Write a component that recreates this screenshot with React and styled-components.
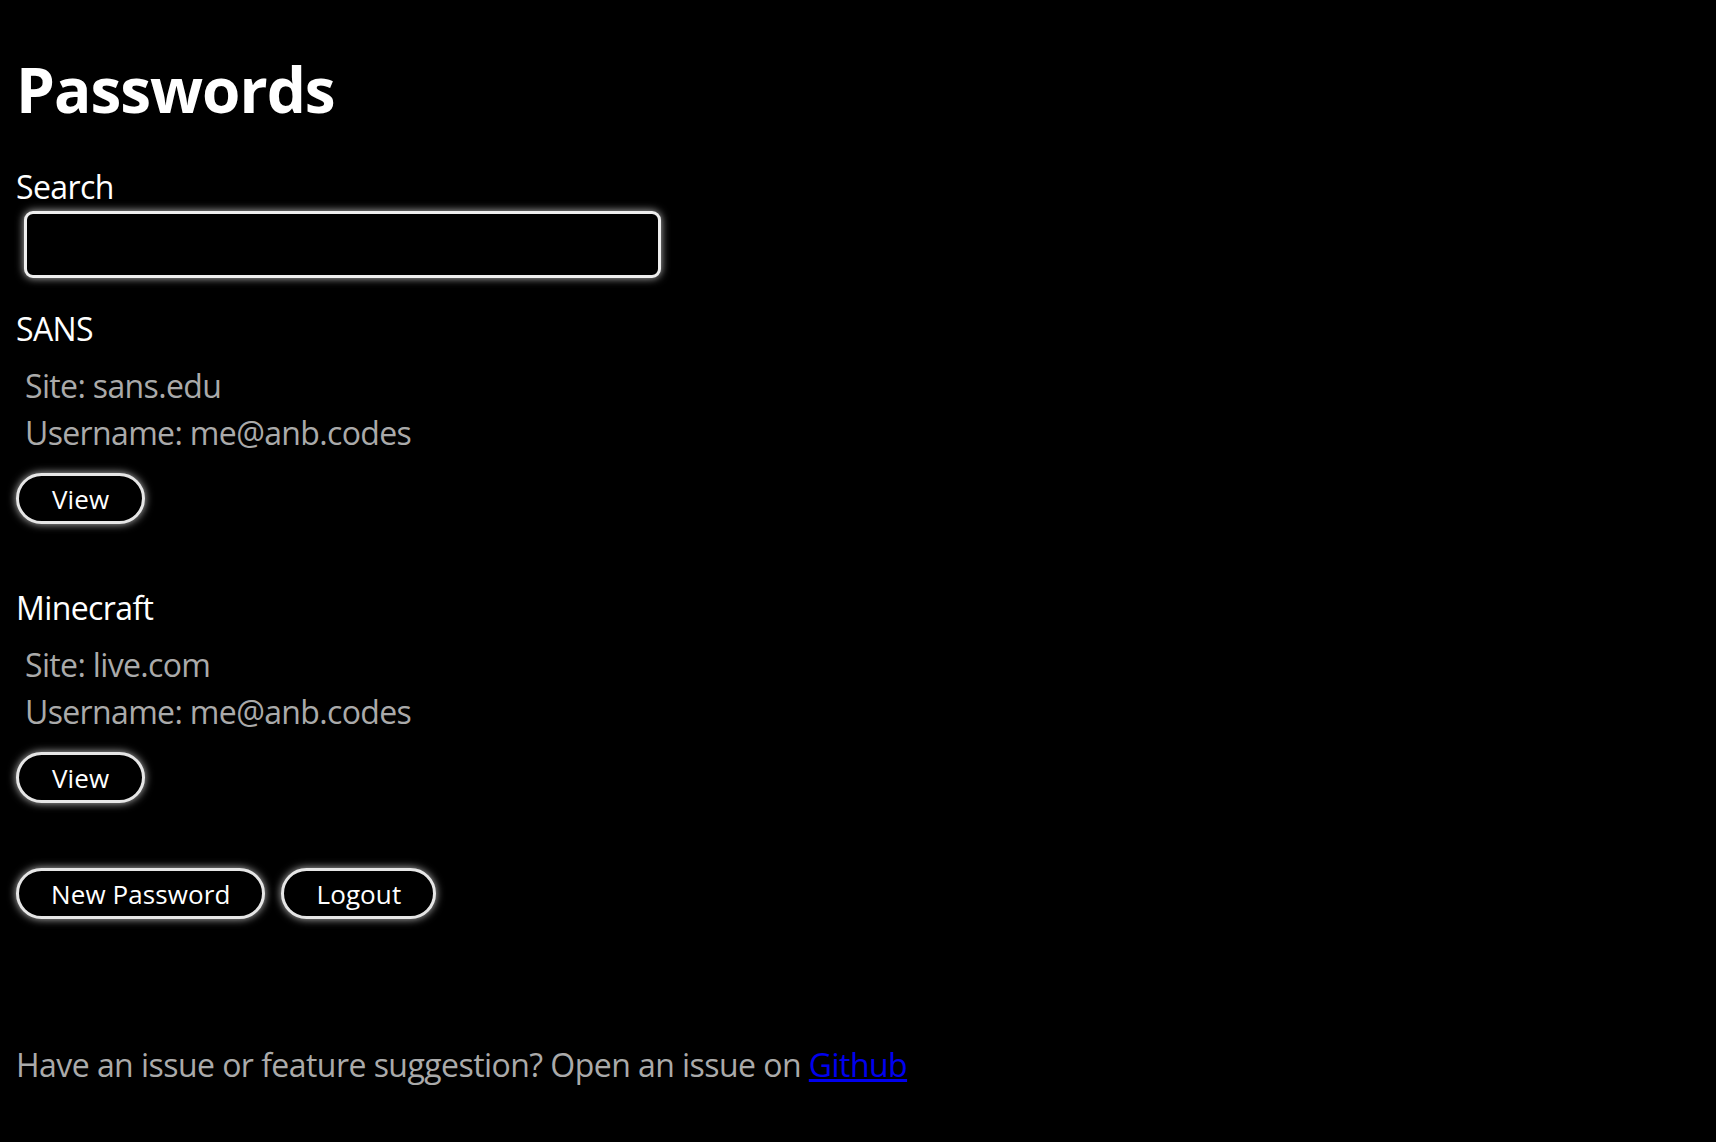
import React, { useState } from 'react';
import styled, { createGlobalStyle } from 'styled-components';

const GlobalStyle = createGlobalStyle`
  html, body {
    margin: 0;
    background: #000;
  }
  body {
    font-family: "Open Sans", "Noto Sans", sans-serif;
    color: #fff;
  }
`;

const Page = styled.main`
  padding: 16px 16px 40px;
  display: flex;
  flex-direction: column;
  align-items: flex-start;
`;

const Title = styled.h1`
  margin: 33px 0 0;
  font-size: 62px;
  font-weight: 700;
  line-height: 80px;
  letter-spacing: -1px;
`;

const SearchLabel = styled.label`
  display: flex;
  flex-direction: column;
  align-items: flex-start;
  margin-top: 38px;
  font-size: 32px;
  line-height: 40px;
  letter-spacing: -0.6px;
`;

const SearchInput = styled.input`
  box-sizing: border-box;
  margin: 4px 0 0 8px;
  width: 637px;
  height: 67px;
  padding: 0 16px;
  background: #000;
  color: #fff;
  font: inherit;
  border: 3px solid #eee;
  border-radius: 9px;
  box-shadow: 0 0 9px rgba(255, 255, 255, 0.75);
  outline: none;
`;

const Entry = styled.section`
  display: flex;
  flex-direction: column;
  align-items: flex-start;
  margin-top: ${({ $first }) => ($first ? '31px' : '64px')};
`;

const EntryName = styled.h2`
  margin: 0;
  font-size: 32px;
  font-weight: 400;
  line-height: 40px;
  letter-spacing: -0.6px;
`;

const Details = styled.div`
  margin-top: 13px;
  padding-left: 9px;
  color: #aaa;
  font-size: 32px;
  line-height: 47px;
  letter-spacing: -0.65px;
`;

const Button = styled.button`
  box-sizing: border-box;
  height: 51px;
  padding: 0 ${({ $px }) => $px || '32px'};
  margin-top: ${({ $mt }) => $mt || '0'};
  background: #000;
  color: #fff;
  font-family: inherit;
  font-size: 26px;
  letter-spacing: 0.1px;
  border: 3px solid #e6e6e6;
  border-radius: 26px;
  box-shadow: 0 0 9px rgba(255, 255, 255, 0.75);
  cursor: pointer;
`;

const Actions = styled.div`
  display: flex;
  gap: 16px;
  margin-top: 65px;
`;

const Footer = styled.p`
  margin: 126px 0 0;
  color: #aaa;
  font-size: 32px;
  line-height: 40px;
  letter-spacing: -0.55px;

  a {
    color: #0000ee;
  }
`;

const entries = [
  { name: 'SANS', site: 'sans.edu', user: 'me@anb.codes' },
  { name: 'Minecraft', site: 'live.com', user: 'me@anb.codes' },
];

const App = () => {
  const [query, setQuery] = useState('');

  return (
    <>
      <GlobalStyle />
      <Page>
        <Title>Passwords</Title>
        <SearchLabel>
          Search
          <SearchInput value={query} onChange={(e) => setQuery(e.target.value)} />
        </SearchLabel>
        {entries.map((entry, i) => (
          <Entry key={entry.name} $first={i === 0}>
            <EntryName>{entry.name}</EntryName>
            <Details>
              <div>Site: {entry.site}</div>
              <div>Username: {entry.user}</div>
            </Details>
            <Button $mt="17px" $px="33px">View</Button>
          </Entry>
        ))}
        <Actions>
          <Button>New Password</Button>
          <Button>Logout</Button>
        </Actions>
        <Footer>
          Have an issue or feature suggestion? Open an issue on <a href="#">Github</a>
        </Footer>
      </Page>
    </>
  );
};

export default App;
